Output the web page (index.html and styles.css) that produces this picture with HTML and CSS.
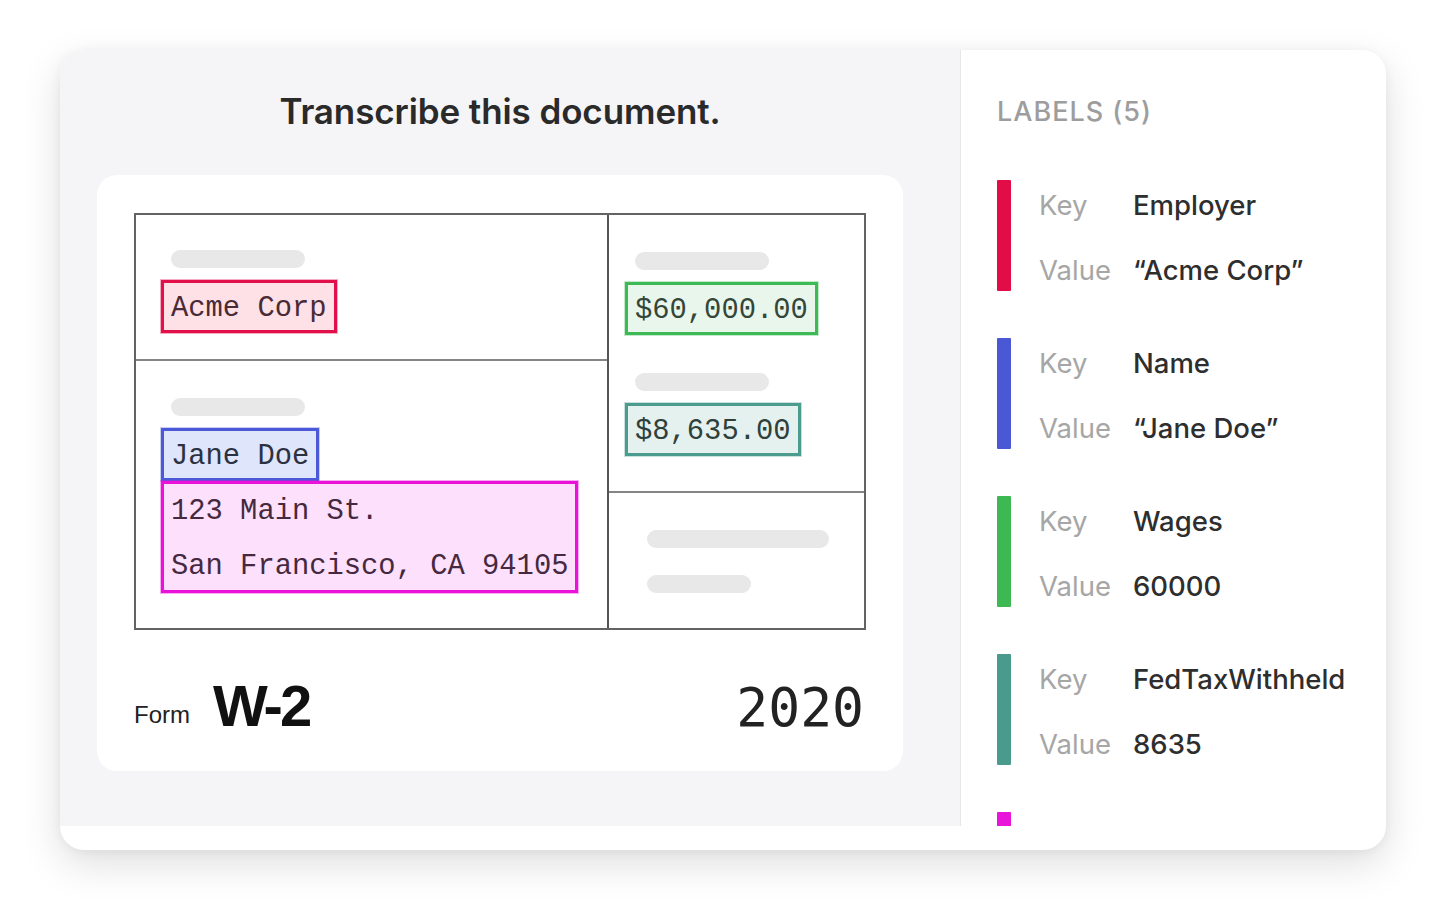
FILE: index.html
```html
<!DOCTYPE html>
<html lang="en">
<head>
<meta charset="utf-8">
<title>Transcribe this document</title>
<link rel="stylesheet" href="styles.css">
</head>
<body>
<div class="stage">
  <div class="card">
    <div class="main">
      <section class="left">
        <h1 class="title">Transcribe this document.</h1>
        <div class="doc">
          <div class="form">
            <div class="col col-left">
              <div class="cell cell-lt">
                <div class="skel skel-a"></div>
                <div class="box box-red">Acme Corp</div>
              </div>
              <div class="cell cell-lb">
                <div class="skel skel-a"></div>
                <div class="box box-blue">Jane Doe</div>
                <div class="box box-magenta"><div>123 Main St.</div><div>San Francisco, CA 94105</div></div>
              </div>
            </div>
            <div class="col col-right">
              <div class="cell cell-rt">
                <div class="skel skel-a"></div>
                <div class="box box-green">$60,000.00</div>
                <div class="skel skel-a skel-gap"></div>
                <div class="box box-teal">$8,635.00</div>
              </div>
              <div class="cell cell-rb">
                <div class="skel skel-long"></div>
                <div class="skel skel-short"></div>
              </div>
            </div>
          </div>
          <div class="foot">
            <div class="formname"><span class="form-word">Form</span><span class="w2">W-2</span></div>
            <div class="year">2020</div>
          </div>
        </div>
      </section>
      <aside class="right">
        <h2 class="labels-head">LABELS (5)</h2>
        <ul class="labels">
          <li class="label">
            <span class="bar bar-red"></span>
            <div class="kv">
              <span class="k">Key</span><span class="v">Employer</span>
              <span class="k">Value</span><span class="v">“Acme Corp”</span>
            </div>
          </li>
          <li class="label">
            <span class="bar bar-blue"></span>
            <div class="kv">
              <span class="k">Key</span><span class="v">Name</span>
              <span class="k">Value</span><span class="v">“Jane Doe”</span>
            </div>
          </li>
          <li class="label">
            <span class="bar bar-green"></span>
            <div class="kv">
              <span class="k">Key</span><span class="v">Wages</span>
              <span class="k">Value</span><span class="v">60000</span>
            </div>
          </li>
          <li class="label">
            <span class="bar bar-teal"></span>
            <div class="kv">
              <span class="k">Key</span><span class="v">FedTaxWithheld</span>
              <span class="k">Value</span><span class="v">8635</span>
            </div>
          </li>
          <li class="label">
            <span class="bar bar-magenta"></span>
            <div class="kv">
              <span class="k">Key</span><span class="v">Address</span>
              <span class="k">Value</span><span class="v">“123 Main St.”</span>
            </div>
          </li>
        </ul>
      </aside>
    </div>
  </div>
</div>
</body>
</html>
```
FILE: styles.css
```css
* { box-sizing: border-box; }
html, body { margin: 0; padding: 0; background: #ffffff; }
body { font-family: Inter, "Open Sans", sans-serif; color: #2b2b2b; }

.stage { padding: 50px 60px 70px 60px; min-height: 920px; }

.card {
  width: 1326px;
  height: 800px;
  background: #ffffff;
  border-radius: 24px;
  overflow: hidden;
  box-shadow: 0 14px 40px rgba(0, 0, 0, 0.13), 0 2px 12px rgba(0, 0, 0, 0.05);
}

.main {
  display: flex;
  height: 776px;
  overflow: hidden;
}

.left {
  width: 900px;
  flex: none;
  background: #f5f5f7;
  padding: 0 57px 0 37px;
}

.title {
  margin: 0;
  padding-top: 41px;
  height: 125px;
  line-height: 40px;
  text-align: center;
  font-size: 35px;
  font-weight: 600;
  color: #2a2a2a;
  letter-spacing: -0.1px;
}

.doc {
  background: #ffffff;
  border-radius: 20px;
  height: 596px;
  padding: 38px 37px 0 37px;
}

.form {
  display: flex;
  width: 732px;
  height: 417px;
  border: 2px solid #636363;
  font-family: "Liberation Mono", "DejaVu Sans Mono", monospace;
  font-size: 28.8px;
}

.col { display: flex; flex-direction: column; }
.col-left { width: 473px; border-right: 2px solid #555555; }
.col-right { flex: 1; }

.cell { display: flex; flex-direction: column; align-items: flex-start; }
.cell-lt { height: 146px; border-bottom: 2px solid #858585; padding: 35px 0 0 25px; }
.cell-lb { flex: 1; padding: 37px 0 0 25px; }
.cell-rt { height: 278px; border-bottom: 2px solid #858585; padding: 37px 0 0 16px; }
.cell-rb { flex: 1; padding: 37px 0 0 38px; }

.skel {
  height: 18px;
  border-radius: 9px;
  background: #e8e8e8;
}
.skel-a { width: 134px; margin-left: 10px; margin-bottom: 12px; }
.skel-gap { margin-top: 38px; }
.skel-long { width: 182px; margin-bottom: 27px; }
.skel-short { width: 104px; }

.box {
  border: 3px solid;
  padding: 4px 7px 0 7px;
  line-height: 43px;
  white-space: pre;
  color: #352a31;
  font-weight: 400;
}
.box-red { border-color: #e2104a; background: #fde1e7; box-shadow: 0 0 0 1px rgba(226, 16, 74, 0.35); color: #4a2a35; }
.box-green { border-color: #3dba55; background: #e9f6eb; box-shadow: 0 0 0 1px rgba(61, 186, 85, 0.3); color: #34463a; }
.box-teal { border-color: #4b9c8f; background: #e5f1ef; box-shadow: 0 0 0 1px rgba(75, 156, 143, 0.3); color: #2f403b; }
.box-blue { border-color: #4b59d8; background: #dfe5fa; box-shadow: 0 0 0 1px rgba(75, 89, 216, 0.3); color: #2c3142; }
.box-magenta {
  border-color: #ea12d9;
  background: #fde0fb;
  box-shadow: 0 0 0 1px rgba(234, 18, 217, 0.35);
  height: 112px;
  padding: 0 7px;
  line-height: 55px;
  color: #45293f;
}

.foot {
  display: flex;
  justify-content: space-between;
  align-items: baseline;
  margin-top: 47px;
  width: 732px;
  line-height: 1;
}
.formname { display: flex; align-items: baseline; }
.form-word {
  font-family: "Liberation Sans Narrow", "Liberation Sans", sans-serif;
  font-size: 24px;
  color: #222;
  margin-right: 23px;
  position: relative;
  top: -3px;
}
.w2 {
  font-family: "Liberation Sans Narrow", "Liberation Sans", sans-serif;
  font-weight: 700;
  font-size: 58px;
  letter-spacing: -3px;
  color: #111;
}
.year {
  font-family: "DejaVu Sans Mono", "Liberation Mono", monospace;
  font-size: 53px;
  color: #222;
  margin-right: 2px;
}

.right {
  flex: 1;
  border-left: 1px solid #e7e7e7;
  background: #ffffff;
  padding: 47px 0 0 36px;
}

.labels-head {
  margin: 0;
  line-height: 30px;
  font-size: 27px;
  font-weight: 500;
  color: #9d9d9d;
  letter-spacing: 1px;
}

.labels {
  list-style: none;
  margin: 53px 0 0 0;
  padding: 0;
  display: flex;
  flex-direction: column;
  gap: 47px;
}

.label { display: flex; align-items: flex-start; }

.bar {
  width: 14px;
  height: 111px;
  flex: none;
  border-radius: 1px;
}
.bar-red { background: #e20d47; }
.bar-blue { background: #4b58d6; }
.bar-green { background: #3db852; }
.bar-teal { background: #4a9a8e; }
.bar-magenta { background: #e914d9; }

.kv {
  display: grid;
  grid-template-columns: 94px auto;
  row-gap: 29px;
  margin-left: 28px;
  padding-top: 7px;
  font-size: 27.5px;
  line-height: 36px;
}
.k { color: #a6a6a6; font-weight: 400; }
.v { color: #2e2e2e; font-weight: 500; }
```
